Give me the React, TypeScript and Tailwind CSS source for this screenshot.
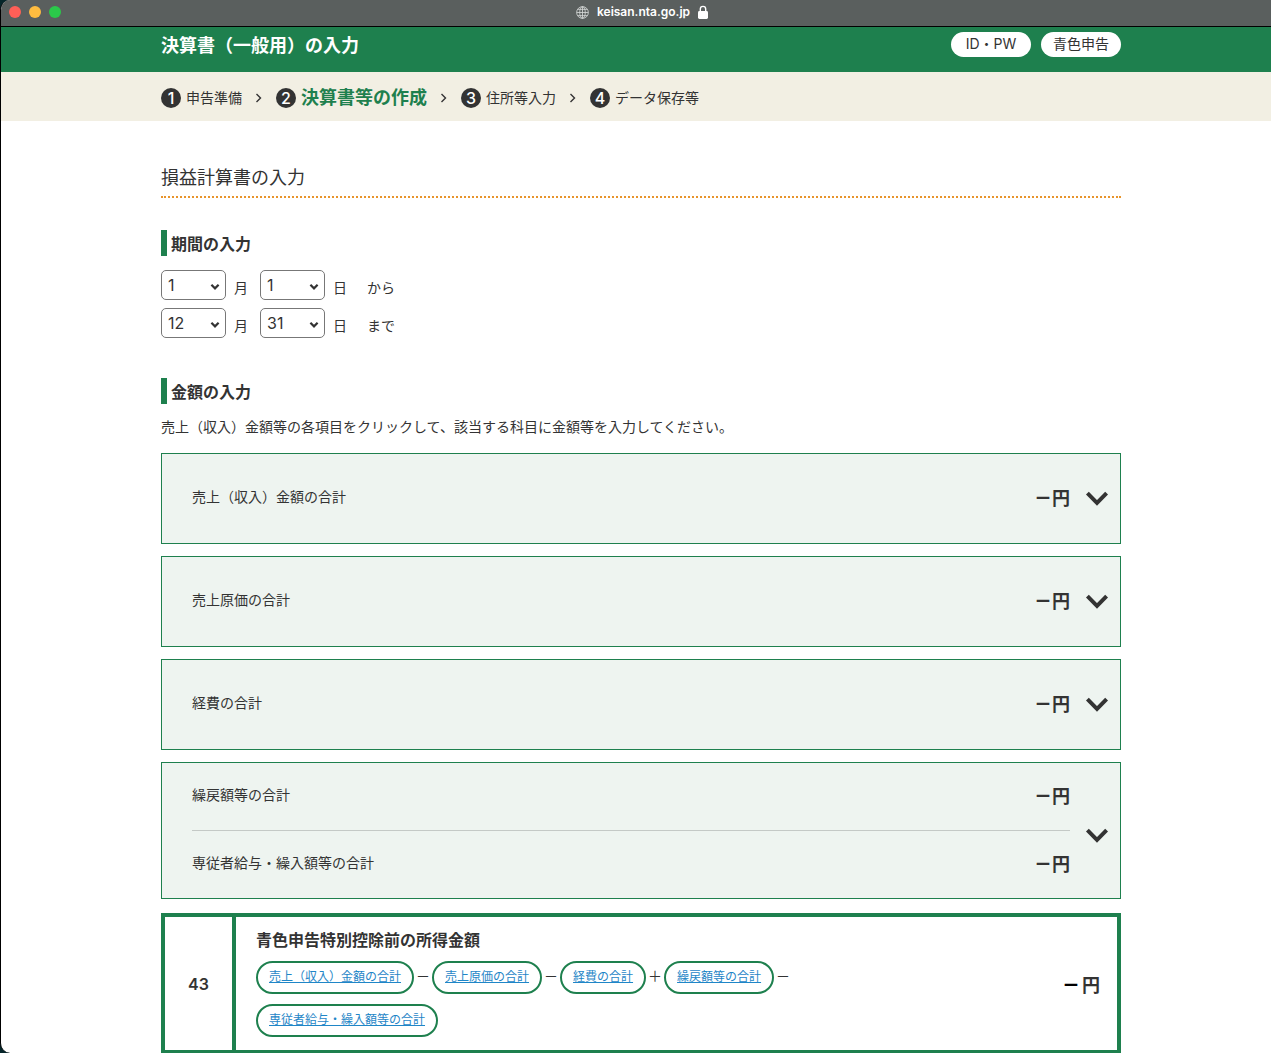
import { clsx } from 'clsx';
import React, { useState } from 'react';

type Step = {
    label: string;
    active?: boolean;
};

type PeriodRowProps = {
    id: string;
    month: number;
    day: number;
    suffix: string;
};

type Formula = {
    label: string;
    operator?: string;
};

const STEPS: Step[] = [
    { label: '申告準備' },
    { label: '決算書等の作成', active: true },
    { label: '住所等入力' },
    { label: 'データ保存等' },
];

const ACCOUNTS: string[][] = [
    ['売上（収入）金額の合計'],
    ['売上原価の合計'],
    ['経費の合計'],
    ['繰戻額等の合計', '専従者給与・繰入額等の合計'],
];

const FORMULA: Formula[] = [
    { label: '売上（収入）金額の合計', operator: '－' },
    { label: '売上原価の合計', operator: '－' },
    { label: '経費の合計', operator: '＋' },
    { label: '繰戻額等の合計', operator: '－' },
    { label: '専従者給与・繰入額等の合計' },
];

const range = (max: number) => Array.from({ length: max }, (_, i) => i + 1);

const GlobeIcon = () => (
    <svg className="size-[13px] text-[#d5d8d7]" viewBox="0 0 14 14" fill="none" stroke="currentColor" strokeWidth="0.9">
        <circle cx="7" cy="7" r="6.3" />
        <ellipse cx="7" cy="7" rx="3" ry="6.3" />
        <path d="M7 .7v12.6M.7 7h12.6M1.8 3.6h10.4M1.8 10.4h10.4" />
    </svg>
);

const LockIcon = () => (
    <svg className="h-[14px] w-[10px] text-white" viewBox="0 0 10 14">
        <path d="M2.3 7V4.1a2.7 2.7 0 0 1 5.4 0V7" fill="none" stroke="currentColor" strokeWidth="1.4" />
        <rect x="0" y="6" width="10" height="8" rx="1.4" fill="currentColor" />
    </svg>
);

const StepArrow = () => (
    <svg className="mx-[13px] h-[10px] w-2" viewBox="0 0 8 10" fill="none" stroke="#333" strokeWidth="1.4">
        <path d="M1.5 1l4 4-4 4" />
    </svg>
);

const ExpandIcon = () => (
    <svg className="h-4 w-6 shrink-0" viewBox="0 0 24 16" fill="none" stroke="#333" strokeWidth="4">
        <path d="M2.4 2.2L12 11.8l9.6-9.6" />
    </svg>
);

const TitleBar = () => (
    <div className="flex h-[27px] items-center border-b border-black bg-[#5a5f5e] pb-[2px] pl-2">
        <div className="flex flex-1 gap-2">
            <span className="size-3 rounded-full bg-[#ff5f57]" />
            <span className="size-3 rounded-full bg-[#febc40]" />
            <span className="size-3 rounded-full bg-[#2bc84a]" />
        </div>
        <div className="flex items-center pl-1">
            <GlobeIcon />
            <span className="mx-2 text-[12px] font-semibold leading-4 text-white">keisan.nta.go.jp</span>
            <LockIcon />
        </div>
        <div className="flex-1" />
    </div>
);

const SectionTitle: React.FC<{ children: React.ReactNode }> = ({ children }) => (
    <h3 className="h-[26px] border-l-6 border-[#1e804e] pl-1 text-[16px] font-bold leading-[28px]">{children}</h3>
);

const NumberSelect: React.FC<{ label: string; initial: number; max: number }> = ({ label, initial, max }) => {
    const [value, setValue] = useState(initial);

    return (
        <div className="relative">
            <select
                aria-label={label}
                value={value}
                onChange={e => setValue(Number(e.target.value))}
                className="block h-[30px] w-[65px] appearance-none rounded-[5px] border border-[#777] bg-white pb-px pl-[6px] text-[16px] leading-6"
            >
                {range(max).map(n => <option key={n} value={n}>{n}</option>)}
            </select>
            <svg
                className="pointer-events-none absolute right-[6px] top-[13px] h-2 w-[10px]"
                viewBox="0 0 10 8"
                fill="none"
                stroke="#333"
                strokeWidth="2.2"
            >
                <path d="M1.4 1.8L5 5.4l3.6-3.6" />
            </svg>
        </div>
    );
};

const PeriodRow: React.FC<PeriodRowProps> = ({ id, month, day, suffix }) => (
    <div className="flex h-[30px] items-center text-[14px]">
        <NumberSelect label={`${id} 月`} initial={month} max={12} />
        <span className="ml-2 mr-3 pt-[6px] leading-5">月</span>
        <NumberSelect label={`${id} 日`} initial={day} max={31} />
        <span className="ml-2 mr-5 pt-[6px] leading-5">日</span>
        <span className="pt-[6px] leading-5">{suffix}</span>
    </div>
);

const AccountPanel: React.FC<{ rows: string[] }> = ({ rows }) => {
    const [open, setOpen] = useState(false);

    return (
        <button
            type="button"
            aria-expanded={open}
            onClick={() => setOpen(pre => !pre)}
            className="flex w-full items-center border border-[#1e804e] bg-[#eef4f0] pl-[30px] pr-[11px] text-left"
        >
            <span className="flex flex-1 flex-col">
                {rows.map((row, i) => (
                    <span
                        key={row}
                        className={clsx(
                            'flex items-center justify-between',
                            rows.length > 1 ? 'h-[67px]' : 'h-[89px]',
                            i > 0 && 'h-[68px] border-t border-[#c4c9c6]'
                        )}
                    >
                        <span className="pb-[3px] text-[14px] leading-5">{row}</span>
                        <span className="text-[18px] font-bold leading-6"><span className="font-black">－</span>円</span>
                    </span>
                ))}
            </span>
            <span className={clsx('ml-[15px]', rows.length > 1 && 'pt-[10px]')}>
                <ExpandIcon />
            </span>
        </button>
    );
};

const IncomeSummary = () => (
    <section className="flex border-4 border-b-3 border-[#1e804e]">
        <div className="flex w-[71px] shrink-0 items-center justify-center border-r-4 border-[#1e804e] text-[16px] font-semibold">
            43
        </div>
        <div className="w-[580px] pb-[13px] pl-5 pt-[10px]">
            <h4 className="text-[16px] font-bold leading-[26px]">青色申告特別控除前の所得金額</h4>
            <div className="mt-2 flex flex-wrap gap-y-[10px]">
                {FORMULA.map(({ label, operator }) => (
                    <span key={label} className="flex items-center">
                        <a
                            href="#"
                            className="h-[33px] rounded-full border-2 border-[#1e804e] px-[11px] text-[12px] leading-[27px] text-[#1f86c7] underline"
                        >
                            {label}
                        </a>
                        {operator && <span className="w-[18px] pb-1 text-center text-[14px] leading-5">{operator}</span>}
                    </span>
                ))}
            </div>
        </div>
        <div className="flex flex-1 items-center justify-end gap-[2px] pr-[17px] pt-1 text-[18px] font-bold leading-6">
            <span className="font-black text-black">－</span>
            <span>円</span>
        </div>
    </section>
);

const App = () => (
    <div className="min-h-screen bg-[#06262a]">
        <div className="min-h-screen overflow-hidden rounded-l-[10px] border-l border-black bg-white font-['Inter','Noto_Sans_CJK_JP',sans-serif] text-[#333]">
            <TitleBar />

            <header className="bg-[#1e804e] pl-[10px]">
                <div className="mx-auto flex h-[45px] max-w-[960px] items-start justify-between pt-[5px]">
                    <h1 className="text-[18px] font-bold leading-[28px] text-white">決算書（一般用）の入力</h1>
                    <div className="flex gap-[10px] text-[14px]">
                        <span className="h-[25px] w-20 rounded-full bg-white text-center leading-[24px]">ID・PW</span>
                        <span className="h-[25px] w-20 rounded-full bg-white text-center leading-[24px]">青色申告</span>
                    </div>
                </div>
            </header>

            <nav className="bg-[#f2efe3] pl-[10px]">
                <ol className="mx-auto flex h-[49px] max-w-[960px] items-center pt-[2px]">
                    {STEPS.map(({ label, active }, i) => (
                        <li key={label} className="flex items-center">
                            {i > 0 && <StepArrow />}
                            <span className="mr-[5px] flex size-5 items-center justify-center rounded-full bg-[#333] text-[16px] font-medium leading-5 text-white">
                                {i + 1}
                            </span>
                            <span className={active ? 'text-[18px] font-bold leading-6 text-[#1e804e]' : 'text-[14px] leading-5'}>
                                {label}
                            </span>
                        </li>
                    ))}
                </ol>
            </nav>

            <main className="pl-[10px]">
                <div className="mx-auto max-w-[960px] pt-11">
                    <h2 className="border-b-2 border-dotted border-[#e8942b] pb-[5px] text-[18px] leading-[26px]">損益計算書の入力</h2>

                    <div className="mt-8">
                        <SectionTitle>期間の入力</SectionTitle>
                        <div className="mt-[14px] flex flex-col gap-2">
                            <PeriodRow id="開始" month={1} day={1} suffix="から" />
                            <PeriodRow id="終了" month={12} day={31} suffix="まで" />
                        </div>
                    </div>

                    <div className="mt-10">
                        <SectionTitle>金額の入力</SectionTitle>
                        <p className="mt-[13px] text-[14px] leading-5">
                            売上（収入）金額等の各項目をクリックして、該当する科目に金額等を入力してください。
                        </p>
                        <div className="mb-[14px] mt-4 flex flex-col gap-3">
                            {ACCOUNTS.map(rows => <AccountPanel key={rows[0]} rows={rows} />)}
                        </div>
                        <IncomeSummary />
                    </div>
                </div>
            </main>
        </div>
    </div>
);

export default App;
